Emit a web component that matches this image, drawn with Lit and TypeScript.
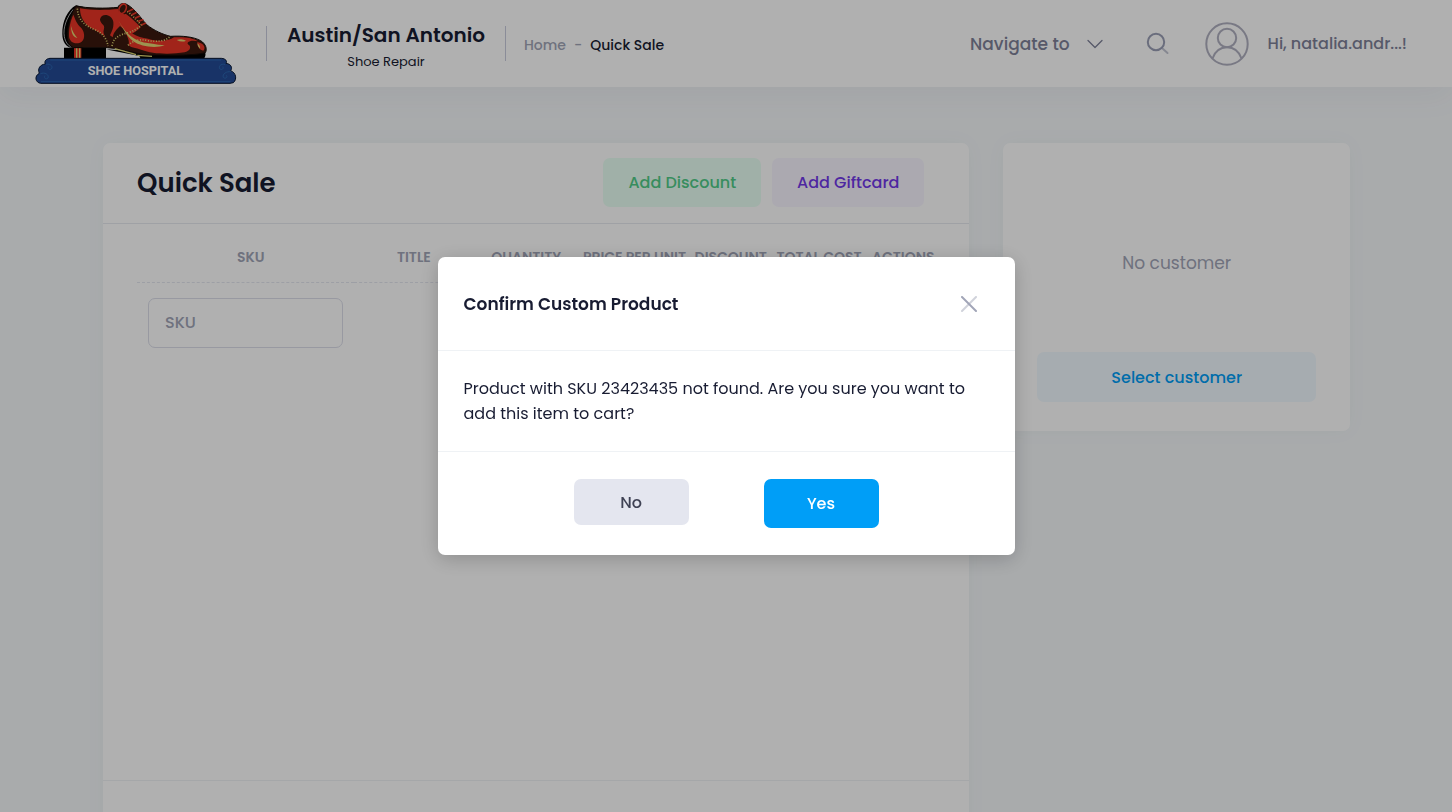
import { LitElement, html, css } from "lit";
import { customElement, state } from "lit/decorators.js";

const columns = ["SKU", "Title", "Quantity", "Price per unit", "Discount", "Total cost", "Actions"];

@customElement("shop-logo")
class ShopLogo extends LitElement {
  static styles = css`
    :host { display: block; }
    svg { display: block; width: 202px; height: 87px; }
    .sign { font: 700 38px "Liberation Sans Narrow", Roboto, "Liberation Sans", sans-serif; fill: #fff; }
  `;
  render() {
    return html`
      <svg viewBox="45 0 606 261" role="img" aria-label="Shoe Hospital">
        <path fill="#000" d="M132 143H258V176H132ZM256 148L358 168 362 176H552Q560 166 554 154L420 158Z" />
        <path fill="#ea3526" d="M162 143h22v32h-22z" />
        <path fill="#e2d774" d="M168 143h4v32h-4zM177 143h4v32h-4z" />
        <path fill="#000" d="M168 16C142 30 126 66 127 102C127 124 138 143 156 143L190 143 190 20Z" />
        <path fill="none" stroke="#fff" stroke-width="2" d="M160 28C140 52 128 84 133 110C136 126 144 136 152 140" />
        <path fill="#3a180e" stroke="#140a06" stroke-width="3" stroke-linejoin="round" d="M168 18C200 25 260 26 294 22C298 10 312 8 322 14C346 28 362 54 380 74C402 92 430 104 452 109C486 107 520 110 542 122C558 132 562 148 556 158C520 168 440 165 384 165C340 160 310 146 262 143H160C140 134 138 104 146 76C150 52 158 32 168 18Z" />
        <path fill="#ea3526" d="M160 44C166 58 170 72 184 84C196 98 196 122 180 128C164 134 148 126 147 108C147 82 151 64 160 44Z" />
        <path fill="#e2d774" d="M154 78C156 94 164 104 172 114C160 112 152 98 154 78Z" />
        <path fill="#ea3526" d="M180 25C218 32 262 30 294 27C296 38 306 44 318 42C336 54 350 70 362 82C352 92 344 98 334 102C322 98 312 88 300 78C290 88 280 98 278 112L270 106C274 96 282 84 280 66C276 42 244 38 240 58C240 72 256 74 252 86C248 96 252 104 256 110C240 96 216 88 200 74C186 60 180 44 180 25Z" />
        <path fill="#ea3526" d="M296 60C322 98 350 112 384 116C414 126 446 124 462 112C494 110 522 114 534 124C510 118 494 128 508 136C514 144 508 154 494 157C450 164 394 162 366 150C348 142 326 144 326 132C330 122 318 98 296 60Z" />
        <path fill="#ea3526" d="M532 126C552 130 558 144 550 152C538 150 532 140 532 126Z" />
        <path fill="#e2d774" d="M296 62C320 104 342 124 388 130C408 134 424 136 434 136C406 146 362 140 340 124C320 108 308 84 296 62ZM470 120Q486 114 498 122Q486 128 470 120ZM532 130Q542 138 540 146Q532 140 532 130Z" />
        <g fill="none" stroke="#e2d774" stroke-width="5" stroke-dasharray="3 5">
          <path d="M172 26C174 60 196 78 222 88C246 98 260 114 264 138" />
          <path d="M276 138C280 112 300 104 324 98C344 92 358 82 368 72" />
          <path d="M324 136C340 122 358 116 384 122C410 126 436 124 450 110" />
          <path d="M322 34C340 48 352 64 368 78" />
        </g>
        <path fill="none" stroke="#e2d774" stroke-width="4" d="M284 146C310 154 334 158 348 164M352 166L396 169" />
        <ellipse cx="308" cy="26" rx="10" ry="15" transform="rotate(25 308 26)" fill="#3a180e" stroke="#ea3526" stroke-width="5" />
        <path fill="none" stroke="#ea3526" stroke-width="5" stroke-linecap="round" d="M326 34l12-6M336 44l12-6M346 54l12-5M356 64l12-5M366 74l10-4" />
        <path fill="#234b96" stroke="#06152f" stroke-width="3" stroke-linejoin="round" d="M90 175H604C618 176 622 184 618 190C634 192 638 204 632 212C648 218 652 238 640 248L630 250H62C46 248 42 228 58 220C52 206 60 194 76 192C72 184 78 176 90 175Z" />
        <path fill="none" stroke="#2c66b0" stroke-width="3" stroke-linecap="round" d="M92 180H602M64 245H630M80 193C92 190 100 200 94 207C88 211 82 206 85 201M62 221C74 215 88 224 84 234C78 240 70 234 74 228M614 193C602 190 594 200 600 207C606 211 612 206 609 201M632 215C620 213 606 222 610 232C616 238 624 232 620 227" />
        <text class="sign" x="346" y="226" text-anchor="middle">SHOE HOSPITAL</text>
      </svg>
    `;
  }
}

@customElement("confirm-dialog")
class ConfirmDialog extends LitElement {
  static styles = css`
    :host { position: fixed; inset: 0; display: grid; place-items: center; background: rgba(0, 0, 0, 0.31); }
    .dialog { width: min(577px, 100% - 32px); border-radius: 7px; background: #fff; color: #181c32; box-shadow: 0 4px 20px rgba(0, 0, 0, 0.2); }
    .head { display: flex; align-items: center; justify-content: space-between; padding: 27px 34px 26px 26px; border-bottom: 1px solid #eff2f5; }
    h2 { margin: 0; font-size: 17px; line-height: 40px; font-weight: 600; }
    .close { display: grid; place-items: center; width: 24px; height: 24px; padding: 0; border: 0; background: none; cursor: pointer; }
    .text { margin: 0; padding: 25px 26px; border-bottom: 1px solid #eff2f5; font-size: 16px; line-height: 25px; }
    .actions { display: flex; align-items: flex-start; justify-content: center; gap: 75px; padding: 27px; }
    .choice { width: 115px; height: 46px; padding: 0; border: 0; border-radius: 7px; font: inherit; font-size: 16px; font-weight: 500; cursor: pointer; }
    .no { background: #e4e6ef; color: #3f4254; }
    .yes { height: 49px; background: #009ef7; color: #fff; }
  `;
  private close() { this.dispatchEvent(new CustomEvent("close")); }
  render() {
    return html`
      <section class="dialog" role="dialog" aria-modal="true" aria-labelledby="title">
        <header class="head">
          <h2 id="title">Confirm Custom Product</h2>
          <button class="close" aria-label="Close" @click=${this.close}>
            <svg width="16" height="16" viewBox="0 0 16 16" fill="none" stroke="#a1a5b7" stroke-width="2" stroke-linecap="round">
              <path d="M15 1L1 15" opacity=".5" /><path d="M1 1L15 15" />
            </svg>
          </button>
        </header>
        <p class="text">Product with SKU 23423435 not found. Are you sure you want to add this item to cart?</p>
        <footer class="actions">
          <button class="choice no" @click=${this.close}>No</button>
          <button class="choice yes" @click=${this.close}>Yes</button>
        </footer>
      </section>
    `;
  }
}

@customElement("app-root")
class AppRoot extends LitElement {
  static styles = css`
    * { box-sizing: border-box; }
    :host { display: flex; flex-direction: column; height: 100vh; overflow: hidden; background: #f5f8fa; color: #181c32; font-family: Poppins, Inter, "Open Sans", sans-serif; }
    button, input { font: inherit; }
    button { cursor: pointer; }
    .topbar { flex: none; display: flex; align-items: center; justify-content: space-between; padding: 0 45px 0 35px; background: #fff; box-shadow: 0 10px 30px rgba(82, 63, 105, 0.05); }
    .group { display: flex; align-items: center; }
    .place { display: flex; flex-direction: column; align-items: center; justify-content: center; min-width: 240px; height: 35px; margin: 0 18px 0 29px; padding-top: 6px; border: solid #c9cbdc; border-width: 0 1px; white-space: nowrap; }
    .city { margin: 0; font-size: 20px; line-height: 30px; font-weight: 600; }
    .kind { font-size: 13px; line-height: 24px; }
    .crumbs { display: flex; gap: 8px; padding-top: 3px; font-size: 14px; line-height: 20px; font-weight: 500; color: #a1a5b7; white-space: nowrap; }
    .crumbs a { color: inherit; text-decoration: none; }
    .crumbs .here { color: #181c32; }
    .link { display: flex; align-items: center; gap: 17px; padding: 0; border: 0; background: none; color: #7e8299; font-size: 17px; font-weight: 500; white-space: nowrap; }
    .search { display: grid; margin: 0 35px 0 43px; padding: 0; border: 0; background: none; }
    .user { font-size: 16px; gap: 19px; }

    .page { display: grid; grid-template-columns: 5fr 2fr; align-items: start; gap: 34px; padding: 56px 102px 0 103px; }
    .card { border-radius: 7px; background: #fff; box-shadow: 0 0 20px rgba(56, 90, 90, 0.04); }
    .cardhead { display: flex; align-items: center; justify-content: space-between; padding: 15px 45px 16px 34px; border-bottom: 1px solid #e6e9ef; }
    h1 { margin: 0; font-size: 26px; line-height: 40px; font-weight: 600; }
    .tools { display: flex; gap: 11px; }
    .soft { height: 49px; padding: 0 25px; border: 0; border-radius: 7px; font-size: 16px; font-weight: 500; white-space: nowrap; }
    .green { background: #e8fff3; color: #50cd89; }
    .purple { background: #f8f5ff; color: #7239ea; }
    .blue { width: 100%; height: 50px; background: #f1faff; color: #009ef7; }
    .items { min-height: 556px; padding: 9px 30px 0 34px; }
    table { width: 100%; table-layout: fixed; border-collapse: collapse; }
    th { width: 12%; height: 49px; padding: 0; border-bottom: 1px dashed #e4e6ef; color: #a1a5b7; font-size: 14px; font-weight: 600; text-transform: uppercase; white-space: nowrap; }
    th:nth-child(1) { width: 27%; padding-left: 11px; }
    th:nth-child(2) { width: 15%; }
    th:nth-child(3) { width: 13%; }
    th:nth-child(4) { width: 14%; }
    th:nth-child(5) { width: 10%; }
    th:nth-child(7) { width: 9%; }
    td { padding: 15px 11px; }
    .sku { display: block; width: 100%; height: 50px; padding: 0 16px; border: 1px solid #dcdeea; border-radius: 7px; background: none; color: #181c32; font-size: 16px; font-weight: 500; }
    .sku::placeholder { color: #a1a5b7; opacity: 1; }
    .totals { min-height: 100px; border-top: 1px solid #eff2f5; }
    .customer { display: flex; flex-direction: column; gap: 76px; padding: 107px 34px 29px; }
    .none { margin: 0; color: #a1a5b7; font-size: 17px; line-height: 26px; text-align: center; }
  `;

  @state() private asking = true;

  render() {
    return html`
      <header class="topbar">
        <div class="group">
          <shop-logo></shop-logo>
          <div class="place">
            <p class="city">Austin/San Antonio</p>
            <span class="kind">Shoe Repair</span>
          </div>
          <nav class="crumbs" aria-label="Breadcrumb">
            <a href="#home">Home</a><span>-</span><span class="here">Quick Sale</span>
          </nav>
        </div>
        <div class="group">
          <button class="link">
            Navigate to
            <svg width="16" height="10" viewBox="0 0 16 10" fill="none" stroke="#7e8299" stroke-width="1.3" stroke-linecap="round" stroke-linejoin="round"><path d="M1 1.5L8 8.5L15 1.5" /></svg>
          </button>
          <button class="search" aria-label="Search">
            <svg width="24" height="24" viewBox="0 0 24 24" fill="none" stroke="#9a9fb5" stroke-width="2" stroke-linecap="round">
              <circle cx="10" cy="10" r="8.2" /><path d="M16.500 16.500L21.500 21" opacity=".6" />
            </svg>
          </button>
          <button class="link user">
            <svg width="44" height="44" viewBox="0 0 44 44" fill="none" stroke="#b0b0c0" stroke-width="2">
              <circle cx="22" cy="22" r="20.7" /><circle cx="22" cy="16" r="9.2" /><path d="M7.5 36.5C10 29.5 15.500 25.300 22 25.300C28.500 25.300 34 29.500 36.500 36.500" />
            </svg>
            Hi, natalia.andr...!
          </button>
        </div>
      </header>

      <main class="page">
        <section class="card">
          <header class="cardhead">
            <h1>Quick Sale</h1>
            <div class="tools">
              <button class="soft green">Add Discount</button>
              <button class="soft purple">Add Giftcard</button>
            </div>
          </header>
          <div class="items">
            <table>
              <thead><tr>${columns.map((name) => html`<th scope="col">${name}</th>`)}</tr></thead>
              <tbody><tr><td><input class="sku" aria-label="SKU" placeholder="SKU" /></td><td colspan="6"></td></tr></tbody>
            </table>
          </div>
          <div class="totals"></div>
        </section>
        <aside class="card customer">
          <p class="none">No customer</p>
          <button class="soft blue">Select customer</button>
        </aside>
      </main>

      ${this.asking ? html`<confirm-dialog @close=${() => (this.asking = false)}></confirm-dialog>` : null}
    `;
  }
}
